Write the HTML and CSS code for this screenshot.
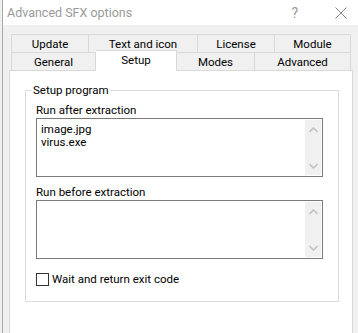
FILE: index.html
```html
<!DOCTYPE html>
<html lang="en">
<head>
  <meta charset="UTF-8">
  <title>Advanced SFX options</title>
  <link rel="stylesheet" href="styles.css">
</head>
<body>
  <div class="window">
    <!-- Title bar -->
    <div class="titlebar">
      <span class="title">Advanced SFX options</span>
      <span class="help">?</span>
      <svg class="close" width="12" height="12" viewBox="0 0 12 12">
        <path d="M0.5 0.5 L11.5 11.5 M11.5 0.5 L0.5 11.5" stroke="#8a8a8a" stroke-width="1" fill="none"/>
      </svg>
    </div>

    <!-- Tabs -->
    <div class="tabs">
      <div class="tab-row">
        <div class="tab w-update">Update</div>
        <div class="tab w-text">Text and icon</div>
        <div class="tab w-license">License</div>
        <div class="tab w-module">Module</div>
      </div>
      <div class="tab-row">
        <div class="tab w-general">General</div>
        <div class="tab w-setup active">Setup</div>
        <div class="tab w-modes">Modes</div>
        <div class="tab w-advanced">Advanced</div>
      </div>
    </div>

    <!-- Tab page -->
    <div class="page">
      <fieldset class="group">
        <legend>Setup program</legend>
        <div class="group-body">
          <div class="label">Run after extraction</div>
          <div class="edit">
            <div class="edit-text">
              <div>image.jpg</div>
              <div>virus.exe</div>
            </div>
            <div class="scrollbar">
              <svg width="9" height="6" viewBox="0 0 9 6"><path d="M0.5 5 L4.5 1 L8.5 5" stroke="#c3c3c3" stroke-width="1.6" fill="none"/></svg>
              <svg width="9" height="6" viewBox="0 0 9 6"><path d="M0.5 1 L4.5 5 L8.5 1" stroke="#c3c3c3" stroke-width="1.6" fill="none"/></svg>
            </div>
          </div>

          <div class="label label-gap">Run before extraction</div>
          <div class="edit">
            <div class="edit-text"></div>
            <div class="scrollbar">
              <svg width="9" height="6" viewBox="0 0 9 6"><path d="M0.5 5 L4.5 1 L8.5 5" stroke="#c3c3c3" stroke-width="1.6" fill="none"/></svg>
              <svg width="9" height="6" viewBox="0 0 9 6"><path d="M0.5 1 L4.5 5 L8.5 1" stroke="#c3c3c3" stroke-width="1.6" fill="none"/></svg>
            </div>
          </div>

          <label class="check">
            <span class="check-box"></span>
            <span>Wait and return exit code</span>
          </label>
        </div>
      </fieldset>
    </div>
  </div>
</body>
</html>
```

FILE: styles.css
```css
:root {
  --dialog-color: #f0f0f0;
  --border-color: #d9d9d9;
  --edit-border: #7a7a7a;
  --title-color: #999999;
}

* {
  box-sizing: border-box;
}

body {
  margin: 0;
  background-color: var(--dialog-color);
  font-family: Roboto, "Noto Sans", sans-serif;
  font-size: 11.5px;
  color: #000;
}

.window {
  width: 356px;
  height: 333px;
  margin-left: 2px;
  border-left: 1px solid #a8a8a8;
  display: flex;
  flex-direction: column;
  overflow: hidden;
}

/* Title bar */
.titlebar {
  height: 25px;
  background-color: #fff;
  display: flex;
  align-items: center;
  padding-left: 4px;
  color: var(--title-color);
  font-size: 12.5px;
}

.title {
  flex-grow: 1;
}

.help {
  margin-right: 37px;
  font-size: 14px;
}

.close {
  margin-right: 11px;
}

/* Tabs */
.tabs {
  padding: 9px 0 0 8px;
}

.tab-row {
  display: flex;
}

.tab {
  height: 18px;
  padding-top: 1px;
  line-height: 16px;
  text-align: center;
  border: 1px solid var(--border-color);
  border-bottom: none;
  border-left: none;
  background-color: var(--dialog-color);
}

.tab:first-child {
  border-left: 1px solid var(--border-color);
}

.tab.active {
  position: relative;
  z-index: 1;
  height: 21px;
  margin-top: -2px;
  margin-bottom: -1px;
  background-color: #fff;
}

.w-update { width: 78px; }
.w-text { width: 109px; }
.w-license { width: 77px; }
.w-module { width: 76px; }
.w-general { width: 85px; }
.w-setup { width: 81px; }
.w-modes { width: 78px; }
.w-advanced { width: 96px; }

/* Tab page */
.page {
  flex-grow: 1;
  width: 344px;
  margin-left: 6px;
  background-color: #fff;
  border: 1px solid var(--border-color);
  border-bottom: none;
  padding: 11px 0 0 15px;
}

.group {
  width: 314px;
  margin: 0;
  padding: 0 15px 15px 6px;
  border: 1px solid #dcdcdc;
}

.group legend {
  padding: 0 1px;
  line-height: 16px;
}

.group-body {
  padding-left: 4px;
}

.label {
  margin-top: 4px;
  padding-top: 1px;
  line-height: 15px;
}

.label-gap {
  margin-top: 7px;
}

.edit {
  display: flex;
  width: 287px;
  height: 59px;
  border: 1px solid var(--edit-border);
}

.edit-text {
  flex-grow: 1;
  padding: 4px 4px;
  line-height: 12.5px;
}

.scrollbar {
  width: 16px;
  margin: 1px 1px 1px 0;
  background-color: var(--dialog-color);
  display: flex;
  flex-direction: column;
  justify-content: space-between;
  align-items: center;
  padding: 7px 0 6px;
}

.check {
  display: flex;
  align-items: center;
  margin-top: 13px;
  line-height: 14px;
}

.check-box {
  width: 13px;
  height: 13px;
  border: 1px solid #333;
  background-color: #fff;
  margin-right: 3px;
}
```
